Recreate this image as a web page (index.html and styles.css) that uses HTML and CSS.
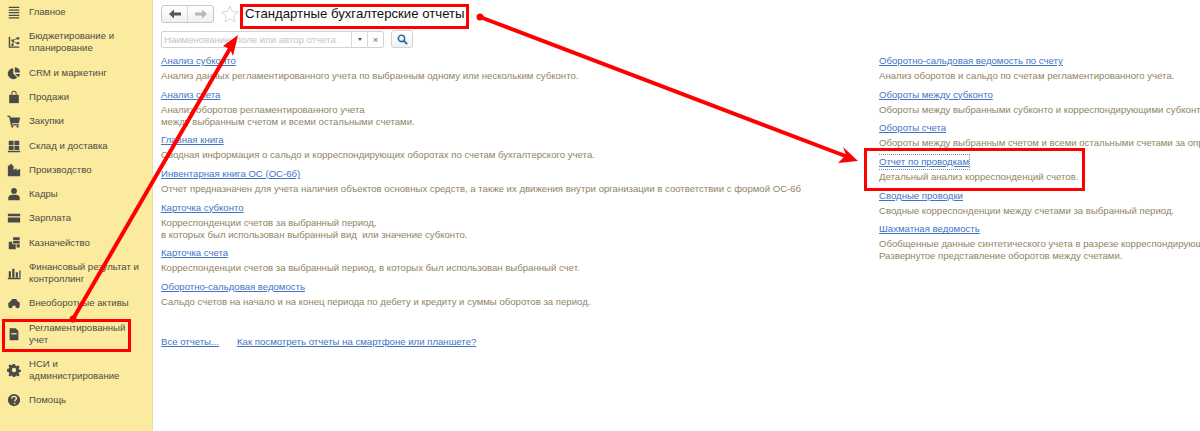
FILE: index.html
```html
<!DOCTYPE html>
<html lang="ru">
<head>
  <meta charset="UTF-8">
  <title>Стандартные бухгалтерские отчеты</title>
  <link rel="stylesheet" href="styles.css">
</head>
<body>
<div class="app">
  <nav class="sidebar">
    <a class="nav-item">
      <svg class="nav-icon" viewBox="0 0 16 16"><path d="M2 2h12v1.500H2zM2 5h12v1.500H2zM2 8h12v1.500H2zM2 11h12v1.500H2zM2 14h12v1.500H2z"/></svg>
      <span>Главное</span>
    </a>
    <a class="nav-item">
      <svg class="nav-icon" viewBox="0 0 16 16"><path d="M2 2h1.600v11H14v1.600H2z"/><path d="M5 5h2.500v2.500H5zM11 2.500h3V5h-3zM5 10h2.500v2.500H5zM11 8h3v2.500h-3z"/><path d="M6 6l6-3 .4.800-6 3zM6.400 6.500l5.200 2.500-.4.800-5.200-2.500zM6 11l1-5 .8.200-1 5z"/></svg>
      <span>Бюджетирование и планирование</span>
    </a>
    <a class="nav-item">
      <svg class="nav-icon" viewBox="0 0 16 16"><path d="M7.200 2.500v6.300l4.500 4.400A6.300 6.300 0 1 1 7.200 2.500z"/><path d="M9 1.500a6 6 0 0 1 5.800 5.800H9zM9.200 9h5.600a6 6 0 0 1-1.700 3.800z"/></svg>
      <span>CRM и маркетинг</span>
    </a>
    <a class="nav-item">
      <svg class="nav-icon" viewBox="0 0 16 16"><path d="M2.500 5.500h11V15h-11z"/><path d="M5.500 5.500V4a2.500 2.500 0 0 1 5 0v1.500" fill="none" stroke="#4a4a48" stroke-width="1.200"/></svg>
      <span>Продажи</span>
    </a>
    <a class="nav-item">
      <svg class="nav-icon" viewBox="0 0 16 16"><path d="M.500 2h3l.6 2H15l-1.500 6.500H5.500l.3 1.200H13.500V13H4.500L2.500 3.500h-2z"/><circle cx="6" cy="14.300" r="1.300"/><circle cx="12" cy="14.300" r="1.300"/></svg>
      <span>Закупки</span>
    </a>
    <a class="nav-item">
      <svg class="nav-icon" viewBox="0 0 16 16"><path d="M2 2h5.500v4.800H2zM8.500 2H14v4.800H8.500zM2 7.800h5.500v4.700H2zM8.500 7.800H14v4.700H8.500zM1 13.500h14V15H1z"/></svg>
      <span>Склад и доставка</span>
    </a>
    <a class="nav-item">
      <svg class="nav-icon" viewBox="0 0 16 16"><path d="M1 15V3h2V1.500h3V3h1.500v5L11 6v2.500l4-2V15z"/></svg>
      <span>Производство</span>
    </a>
    <a class="nav-item">
      <svg class="nav-icon" viewBox="0 0 16 16"><circle cx="8" cy="4.500" r="3.300"/><path d="M1.500 15v-3c0-2 2.500-3 4.500-3.200h4c2 .2 4.500 1.200 4.500 3.200v3z"/></svg>
      <span>Кадры</span>
    </a>
    <a class="nav-item">
      <svg class="nav-icon" viewBox="0 0 16 16"><path d="M1 3h14v3H1zM1 7.500h14V13H1z"/></svg>
      <span>Зарплата</span>
    </a>
    <a class="nav-item">
      <svg class="nav-icon" viewBox="0 0 16 16"><path d="M7 1.500h7.500v3H7zM7 5.500h7.500v3H7zM2 6.500h4v3h4V15H2zM11 9.500h3.500V13H11z"/></svg>
      <span>Казначейство</span>
    </a>
    <a class="nav-item">
      <svg class="nav-icon" viewBox="0 0 16 16"><path d="M2 6h2.500v7H2zM6 3h2.500v10H6zM10 7h2.500v6H10zM14 5h1.500v8H14zM1 13.500h14.500V15H1z"/></svg>
      <span>Финансовый результат и контроллинг</span>
    </a>
    <a class="nav-item">
      <svg class="nav-icon" viewBox="0 0 16 16"><path d="M4 6l2-2.500h4.500L12 6l2.500 1.500V11h-13V8z"/><circle cx="4" cy="11.500" r="2.500"/><circle cx="12" cy="11.500" r="2.500"/></svg>
      <span>Внеоборотные активы</span>
    </a>
    <a class="nav-item">
      <svg class="nav-icon" viewBox="0 0 16 16"><path d="M3 1.500h7l3 3V15H3z"/><path d="M5 7h6v1.500H5z" fill="#fbeb9e"/></svg>
      <span>Регламентированный<br>учет</span>
    </a>
    <a class="nav-item">
      <svg class="nav-icon" viewBox="0 0 16 16"><path fill-rule="evenodd" d="M6.800 1h2.400l.4 2 1.400.6 1.700-1.100 1.700 1.700-1.100 1.700.6 1.400 2 .4v2.400l-2 .4-.6 1.400 1.100 1.700-1.700 1.700-1.700-1.100-1.400.6-.4 2H6.800l-.4-2-1.400-.6-1.700 1.100-1.700-1.700 1.100-1.700-.6-1.400-2-.4V6.800l2-.4.600-1.400-1.100-1.700 1.700-1.700 1.700 1.100 1.400-.6zM8 5.500a2.500 2.500 0 1 0 0 5 2.500 2.500 0 0 0 0-5z"/></svg>
      <span>НСИ и<br>администрирование</span>
    </a>
    <a class="nav-item">
      <svg class="nav-icon" viewBox="0 0 16 16"><circle cx="8" cy="8" r="7"/><path d="M5.500 6.300c0-3.200 5.200-3.200 5.200-.2 0 1.900-2 1.800-2 3.400M8.700 11v1.800" fill="none" stroke="#fbeb9e" stroke-width="1.600"/></svg>
      <span>Помощь</span>
    </a>
  </nav>

  <main class="content">
    <div class="toolbar">
      <div class="nav-buttons">
        <button class="nav-btn">
          <svg width="12" height="10" viewBox="0 0 12 10"><path d="M0 5l5-4.500v3h7v3H5v3z" fill="#555"/></svg>
        </button>
        <button class="nav-btn">
          <svg width="12" height="10" viewBox="0 0 12 10"><path d="M12 5L7 .5v3H0v3h7v3z" fill="#b5b5b5"/></svg>
        </button>
      </div>
      <svg class="star" width="18" height="18" viewBox="0 0 18 18"><path d="M9 1l2.300 5.600 6 .5-4.600 3.900 1.400 5.900L9 13.800l-5.100 3.100 1.400-5.900L.7 7.100l6-.5z" fill="#fff" stroke="#d8d8d8"/></svg>
      <h1 class="page-title">Стандартные бухгалтерские отчеты</h1>
    </div>

    <div class="search-row">
      <div class="search-box">
        <span class="search-text">Наименование, поле или автор отчета</span>
        <span class="search-drop"><i class="caret"></i></span>
        <span class="search-clear">×</span>
      </div>
      <button class="search-btn">
        <svg width="11" height="11" viewBox="0 0 13 13"><circle cx="5.300" cy="5.300" r="3.700" fill="none" stroke="#2a6aa8" stroke-width="1.800"/><path d="M8 8l4 4" stroke="#2a6aa8" stroke-width="2.200"/></svg>
      </button>
    </div>

    <div class="reports">
      <div class="col">
        <div class="report"><a class="report-link">Анализ субконто</a><p>Анализ данных регламентированного учета по выбранным одному или нескольким субконто.</p></div>
        <div class="report"><a class="report-link">Анализ счета</a><p>Анализ оборотов регламентированного учета<br>между выбранным счетом и всеми остальными счетами.</p></div>
        <div class="report"><a class="report-link">Главная книга</a><p>Сводная информация о сальдо и корреспондирующих оборотах по счетам бухгалтерского учета.</p></div>
        <div class="report"><a class="report-link">Инвентарная книга ОС (ОС-6б)</a><p>Отчет предназначен для учета наличия объектов основных средств, а также их движения внутри организации в соответствии с формой ОС-6б</p></div>
        <div class="report"><a class="report-link">Карточка субконто</a><p>Корреспонденции счетов за выбранный период,<br>в которых был использован выбранный вид&nbsp; или значение субконто.</p></div>
        <div class="report"><a class="report-link">Карточка счета</a><p>Корреспонденции счетов за выбранный период, в которых был использован выбранный счет.</p></div>
        <div class="report"><a class="report-link">Оборотно-сальдовая ведомость</a><p>Сальдо счетов на начало и на конец периода по дебету и кредиту и суммы оборотов за период.</p></div>
      </div>
      <div class="col">
        <div class="report"><a class="report-link">Оборотно-сальдовая ведомость по счету</a><p>Анализ оборотов и сальдо по счетам регламентированного учета.</p></div>
        <div class="report"><a class="report-link">Обороты между субконто</a><p>Обороты между выбранными субконто и корреспондирующими субконто.</p></div>
        <div class="report"><a class="report-link">Обороты счета</a><p>Обороты между выбранным счетом и всеми остальными счетами за определенный период.</p></div>
        <div class="report"><a class="report-link is-focused">Отчет по проводкам</a><p>Детальный анализ корреспонденций счетов.</p></div>
        <div class="report"><a class="report-link">Сводные проводки</a><p>Сводные корреспонденции между счетами за выбранный период.</p></div>
        <div class="report"><a class="report-link">Шахматная ведомость</a><p>Обобщенные данные синтетического учета в разрезе корреспондирующих счетов.<br>Развернутое представление оборотов между счетами.</p></div>
      </div>
    </div>

    <div class="footer-links">
      <a class="report-link">Все отчеты...</a>
      <a class="report-link">Как посмотреть отчеты на смартфоне или планшете?</a>
    </div>
  </main>
</div>

<!-- red marks drawn over the screenshot -->
<svg class="marks" width="1200" height="431" viewBox="0 0 1200 431">
  <g fill="none" stroke="#f00" stroke-width="3">
    <rect x="3.500" y="320.500" width="126" height="30"/>
    <rect x="241.500" y="5.500" width="226" height="22"/>
    <rect x="865.500" y="149.500" width="218" height="40"/>
  </g>
  <g fill="none" stroke="#f00" stroke-width="4">
    <path d="M73 319L232 45"/>
    <path d="M480 17L848 157"/>
  </g>
  <g fill="#f00">
    <circle cx="73" cy="319" r="3.500"/>
    <circle cx="480" cy="17" r="3.500"/>
    <path d="M238 35L223 46 230 49 233 56z"/>
    <path d="M858 161L843 147 846 155 838 163z"/>
  </g>
</svg>
</body>
</html>
```
FILE: styles.css
```css
* { box-sizing: border-box; }
html, body {
  margin: 0;
  height: 100%;
  overflow: hidden;
  background: #fff;
  font-family: "Liberation Sans", Arial, sans-serif;
  font-size: 9.600px;
}
.app {
  display: flex;
  height: 431px;
  width: 1200px;
  overflow: hidden;
}

/* left menu */
.sidebar {
  width: 153px;
  flex: none;
  background: #fbeb9e;
  border-right: 1px solid #e6dca8;
  color: #4d4c46;
  font-size: 9.600px;
}
.nav-item {
  display: flex;
  align-items: center;
  gap: 8px;
  padding: 0 4px 0 7px;
  line-height: 12px;
}
.nav-item span { padding: 6.150px 0; }
.nav-icon {
  width: 14px;
  height: 14px;
  flex: none;
  fill: #4a4a48;
}

/* main */
.content {
  flex: 1;
  min-width: 0;
  padding: 3px 0 0 8px;
  color: #8f8563;
}
.toolbar {
  display: flex;
  align-items: center;
  height: 22px;
}
.nav-buttons {
  display: flex;
  width: 53px;
  height: 18px;
  border: 1px solid #c8c8c8;
  border-radius: 3px;
  background: linear-gradient(#fff, #f0f0f0);
}
.nav-btn {
  flex: 1;
  padding: 0;
  border: 0;
  background: none;
  display: flex;
  align-items: center;
  justify-content: center;
}
.nav-btn + .nav-btn { border-left: 1px solid #d8d8d8; }
.star { margin-left: 7px; }
.page-title {
  margin: -2px 0 0 6px;
  font-size: 13.200px;
  font-weight: normal;
  color: #111;
  white-space: nowrap;
}
.search-row {
  display: flex;
  align-items: center;
  gap: 7px;
  margin-top: 5px;
}
.search-box {
  display: flex;
  width: 223px;
  height: 17px;
  border: 1px solid #d2d2d2;
  border-radius: 2px;
  line-height: 15px;
}
.search-text {
  flex: 1;
  padding-left: 2px;
  color: #c4c4c4;
  white-space: nowrap;
}
.search-drop, .search-clear {
  width: 16px;
  flex: none;
  border-left: 1px solid #d8d8d8;
  text-align: center;
  color: #666;
  display: flex;
  align-items: center;
  justify-content: center;
}
.caret {
  border: 2.500px solid transparent;
  border-top: 3px solid #555;
  border-bottom: 0;
}
.search-btn {
  width: 22px;
  height: 18px;
  padding: 0;
  border: 1px solid #d2d2d2;
  border-radius: 3px;
  background: linear-gradient(#fff, #f2f2f2);
  display: flex;
  align-items: center;
  justify-content: center;
}

.reports {
  display: flex;
  margin-top: 6px;
}
.col { flex: none; }
.col:first-child { width: 718px; }
.col:last-child { width: 321px; overflow: hidden; }
.report { padding-bottom: 5.700px; }
.report p {
  margin: 2px 0 0;
  line-height: 12px;
  white-space: nowrap;
}
.report-link {
  color: #3f74c6;
  text-decoration: underline;
  line-height: 14px;
  display: inline-block;
  height: 14px;
}
.is-focused { outline: 1px dotted #7d8fa8; }

.footer-links {
  display: flex;
  gap: 18px;
  margin-top: 21px;
}

.marks {
  position: absolute;
  left: 0;
  top: 0;
  pointer-events: none;
}
```
